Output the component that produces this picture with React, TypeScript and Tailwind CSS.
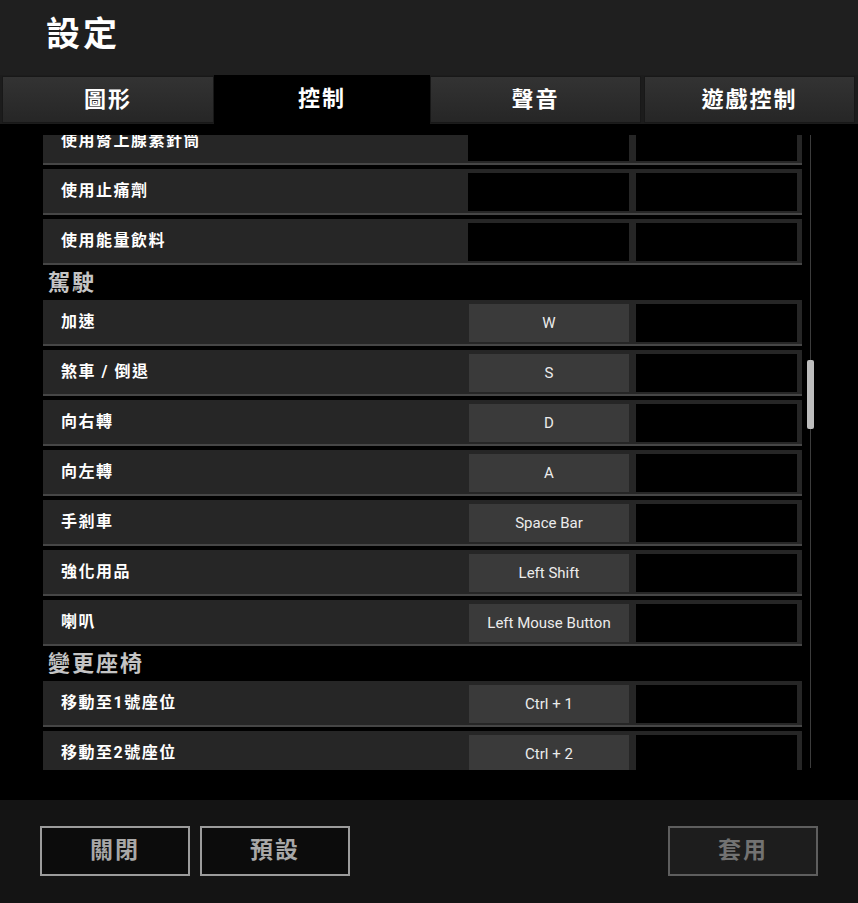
import React from "react";

type Row = { label: string; key1?: string; key2?: string };
type Item = { section: string } | Row;

const items: Item[] = [
  { label: "使用腎上腺素針筒" },
  { label: "使用止痛劑" },
  { label: "使用能量飲料" },
  { section: "駕駛" },
  { label: "加速", key1: "W" },
  { label: "煞車 / 倒退", key1: "S" },
  { label: "向右轉", key1: "D" },
  { label: "向左轉", key1: "A" },
  { label: "手剎車", key1: "Space Bar" },
  { label: "強化用品", key1: "Left Shift" },
  { label: "喇叭", key1: "Left Mouse Button" },
  { section: "變更座椅" },
  { label: "移動至1號座位", key1: "Ctrl + 1" },
  { label: "移動至2號座位", key1: "Ctrl + 2" },
];

const tabs = [
  { name: "圖形", w: "w-[212px]" },
  { name: "控制", w: "w-[216px]", active: true },
  { name: "聲音", w: "w-[211px]" },
  { name: "遊戲控制", w: "w-[211px]" },
];

const KeyCell = ({ value }: { value?: string }) => (
  <div
    className={
      value
        ? "flex h-[38px] w-[160px] items-center justify-center bg-[#3a3a3a] font-['Roboto',sans-serif] text-[15px] text-[#ececec]"
        : "h-[38px] w-[161px] bg-black"
    }
  >
    {value}
  </div>
);

const BindRow = ({ row }: { row: Row }) => (
  <div className="mb-[4px] box-border flex h-[46px] items-start border-b-2 border-[#464646] bg-[#262626]">
    <div className="flex h-[44px] flex-1 items-center pl-[18px] text-[16px] font-bold tracking-[1.5px] text-white">
      {row.label}
    </div>
    <div className="flex gap-[7px] pt-[4px] pr-[5px]">
      <KeyCell value={row.key1} />
      <KeyCell value={row.key2} />
    </div>
  </div>
);

export default function App() {
  return (
    <div className="flex h-[903px] w-[858px] flex-col bg-black font-['Roboto','Noto_Sans_CJK_TC',sans-serif]">
      {/* header */}
      <div className="flex h-[75px] items-center bg-[#1f1f1f] pb-[6px] pl-[46px] text-[34px] font-bold tracking-[3px] text-white">
        設定
      </div>

      {/* tabs */}
      <div className="flex h-[49px] bg-[#1c1c1c] pl-[2px]">
        {tabs.map((t, i) => (
          <div
            key={t.name}
            className={
              t.active
                ? `${t.w} flex h-[49px] items-center justify-center bg-black pb-[2px] text-[22px] font-bold tracking-[2px] text-white`
                : `${t.w} ${i === 3 ? "ml-[3px]" : ""} mt-[1px] flex h-[47px] items-center justify-center border border-[#181818] bg-gradient-to-b from-[#333333] to-[#262626] text-[22px] font-bold tracking-[2px] text-white`
            }
          >
            {t.name}
          </div>
        ))}
      </div>

      {/* list */}
      <div className="flex flex-1 bg-black pt-[11px] pb-[30px] pl-[43px]">
        <div className="h-[635px] w-[759px] overflow-hidden">
          <div className="-mt-[16px]">
            {items.map((it, i) =>
              "section" in it ? (
                <div
                  key={i}
                  className="-mt-[4px] flex h-[35px] items-center pl-[5px] text-[22px] font-bold tracking-[2px] text-[#c4c4c4]"
                >
                  {it.section}
                </div>
              ) : (
                <BindRow key={i} row={it} />
              )
            )}
          </div>
        </div>
        <div className="relative ml-[5px] flex h-[633px] w-[7px] justify-center">
          <div className="h-full w-px bg-[#3c3c3c]" />
          <div className="absolute top-[225px] left-0 h-[69px] w-[7px] rounded-[2px] bg-[#bdbdbd]" />
        </div>
      </div>

      {/* footer */}
      <div className="flex h-[103px] items-start bg-[#141414] px-[40px] pt-[26px]">
        <button className="flex h-[50px] w-[150px] items-center justify-center border-2 border-[#9c9c9c] bg-[#0c0c0c] text-[23px] font-bold tracking-[2px] text-[#a8a8a8]">
          關閉
        </button>
        <button className="ml-[10px] flex h-[50px] w-[150px] items-center justify-center border-2 border-[#9c9c9c] bg-[#0c0c0c] text-[23px] font-bold tracking-[2px] text-[#a8a8a8]">
          預設
        </button>
        <button className="ml-auto flex h-[50px] w-[150px] items-center justify-center border-2 border-[#5e5e5e] bg-[#1d1d1d] text-[23px] font-bold tracking-[2px] text-[#727272]">
          套用
        </button>
      </div>
    </div>
  );
}
